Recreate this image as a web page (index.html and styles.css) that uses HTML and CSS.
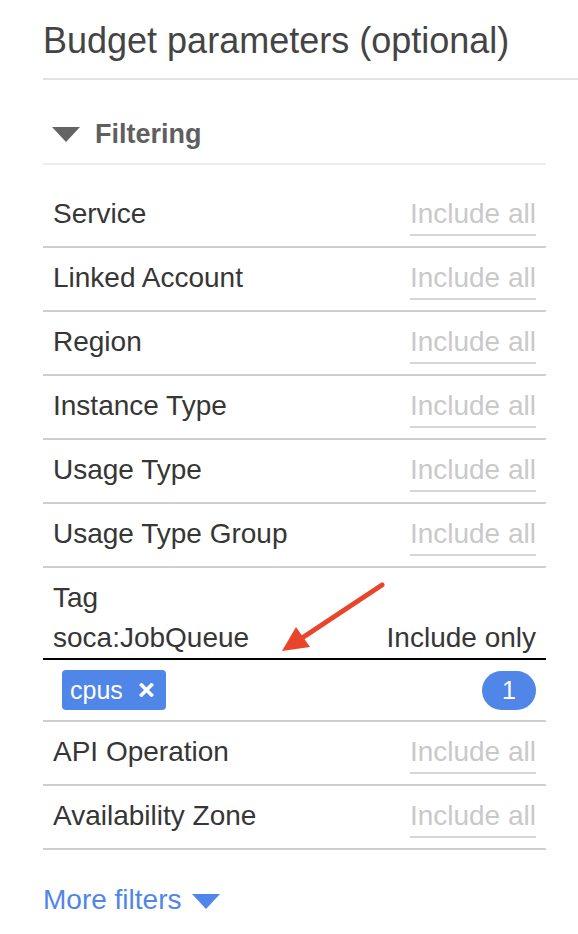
FILE: index.html
```html
<!DOCTYPE html>
<html lang="en">
<head>
<meta charset="utf-8">
<title>Budget parameters</title>
<link rel="stylesheet" href="styles.css">
</head>
<body>
<div class="panel">
  <div class="header">
    <h1 class="title">Budget parameters (optional)</h1>
  </div>
  <div class="filtering">
    <svg class="caret" width="28" height="15" viewBox="0 0 28 15"><path d="M0 0 H28 L14 15 Z" fill="#646464"/></svg>
    <span class="filtering-label">Filtering</span>
  </div>
  <div class="list">
    <div class="row"><span class="label">Service</span><span class="value">Include all</span></div>
    <div class="row"><span class="label">Linked Account</span><span class="value">Include all</span></div>
    <div class="row"><span class="label">Region</span><span class="value">Include all</span></div>
    <div class="row"><span class="label">Instance Type</span><span class="value">Include all</span></div>
    <div class="row"><span class="label">Usage Type</span><span class="value">Include all</span></div>
    <div class="row"><span class="label">Usage Type Group</span><span class="value">Include all</span></div>
    <div class="tag-row">
      <div class="tag-line">Tag</div>
      <div class="tag-line tag-key"><span>soca:JobQueue</span><span>Include only</span></div>
    </div>
    <div class="chip-row">
      <span class="chip">cpus<svg class="chip-x" width="15" height="14" viewBox="0 0 15 14"><path d="M2.5 2 L12.5 12 M12.5 2 L2.5 12" stroke="#fff" stroke-width="3.6" stroke-linecap="square"/></svg></span>
      <span class="badge">1</span>
    </div>
    <div class="row"><span class="label">API Operation</span><span class="value">Include all</span></div>
    <div class="row"><span class="label">Availability Zone</span><span class="value">Include all</span></div>
  </div>
  <div class="more">More filters<svg class="more-caret" width="28" height="15" viewBox="0 0 28 15"><path d="M0 0 H28 L14 15 Z" fill="#4f86e8"/></svg></div>
  <svg class="annot" width="120" height="85" viewBox="0 0 120 85">
    <line x1="112" y1="10" x2="32" y2="63" stroke="#e8452b" stroke-width="5" stroke-linecap="round"/>
    <path d="M12 76 L26 52 L40 72 Z" fill="#e8452b"/>
  </svg>
</div>
</body>
</html>
```
FILE: styles.css
```css
html, body {
  margin: 0;
  padding: 0;
  background: #fff;
}
body {
  font-family: "Liberation Sans", Arial, Helvetica, sans-serif;
  color: #333;
}
.panel {
  position: relative;
  width: 578px;
  height: 934px;
  box-sizing: border-box;
  padding: 0 32px 0 43px;
  overflow: hidden;
}
.header {
  margin-right: -32px;
  padding: 21px 0 17px 0;
  border-bottom: 2px solid #e2e2e2;
}
.title {
  margin: 0;
  font-size: 36px;
  line-height: 40px;
  font-weight: normal;
  color: #444;
}
.filtering {
  display: flex;
  align-items: center;
  padding: 38px 0 13px 9px;
  height: 32px;
  border-bottom: 2px solid #ececec;
}
.caret {
  display: block;
  margin-right: 15px;
}
.filtering-label {
  font-size: 27px;
  line-height: 32px;
  font-weight: bold;
  color: #5f5f5f;
}
.list {
  padding-top: 19px;
}
.row {
  display: flex;
  justify-content: space-between;
  align-items: flex-start;
  height: 48px;
  padding: 14px 10px 0 10px;
  border-bottom: 2px solid #cfcfcf;
  font-size: 28px;
  line-height: 32px;
}
.label {
  color: #363636;
}
.value {
  color: #c9c9c9;
  padding-bottom: 4px;
  border-bottom: 2px solid #d6d6d6;
}
.tag-row {
  padding: 10px 10px 0 10px;
  border-bottom: 2px solid #000;
  font-size: 28px;
  line-height: 40px;
  color: #363636;
}
.tag-key {
  display: flex;
  justify-content: space-between;
}
.chip-row {
  display: flex;
  justify-content: space-between;
  align-items: center;
  padding: 10px 10px 10px 19px;
  height: 40px;
  border-bottom: 2px solid #cfcfcf;
}
.chip {
  display: flex;
  align-items: center;
  box-sizing: border-box;
  height: 40px;
  width: 104px;
  padding: 0 0 0 8px;
  background: #4f86e8;
  border-radius: 4px;
  color: #fff;
  font-size: 25px;
  line-height: 40px;
}
.chip-x {
  display: block;
  margin-left: 16px;
}
.badge {
  display: flex;
  align-items: center;
  justify-content: center;
  width: 54px;
  height: 39px;
  border-radius: 20px;
  background: #4f86e8;
  color: #fff;
  font-size: 25px;
}
.more {
  display: flex;
  align-items: center;
  margin-top: 34px;
  font-size: 28px;
  line-height: 32px;
  color: #4f86e8;
}
.more-caret {
  display: block;
  margin-left: 11px;
  margin-top: 2px;
}
.annot {
  position: absolute;
  left: 270px;
  top: 575px;
}
```
